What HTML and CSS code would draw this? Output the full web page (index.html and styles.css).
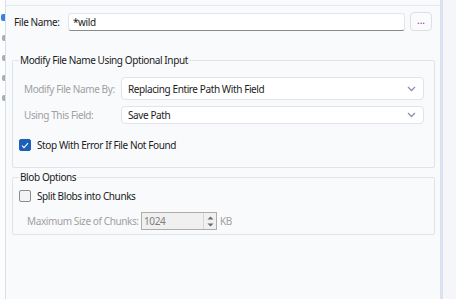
FILE: index.html
```html
<!DOCTYPE html>
<html>
  <head>
    <title>File Name</title>
    <link rel="stylesheet" href="styles.css">
  </head>
  <body>
    <div class="app">
      <div class="sidebar">
        <span class="tool tool-blue"></span>
        <span class="tool"></span>
        <span class="tool"></span>
        <span class="tool"></span>
        <span class="tool"></span>
      </div>
      <div class="panel">
        <div class="panel-head"></div>

        <div class="file-row">
          <label class="label" for="filename">File Name:</label>
          <input class="text-input" type="text" id="filename" value="*wild" />
          <button class="browse" type="button">...</button>
        </div>

        <fieldset class="group group-modify">
          <legend>Modify File Name Using Optional Input</legend>
          <div class="field-row first">
            <span class="label muted">Modify File Name By:</span>
            <div class="select tall">
              <span>Replacing Entire Path With Field</span>
              <svg class="chev" width="9" height="6" viewBox="0 0 9 6"><path d="M1 1l3.5 3.5L8 1" fill="none" stroke="#8792ad" stroke-width="1.3"/></svg>
            </div>
          </div>
          <div class="field-row">
            <span class="label muted">Using This Field:</span>
            <div class="select">
              <span>Save Path</span>
              <svg class="chev" width="9" height="6" viewBox="0 0 9 6"><path d="M1 1l3.5 3.5L8 1" fill="none" stroke="#8792ad" stroke-width="1.3"/></svg>
            </div>
          </div>
          <div class="check-row stop">
            <span class="check checked">
              <svg width="8" height="7" viewBox="0 0 8 7"><path d="M1 3.6l2 2L7 1.2" fill="none" stroke="#fff" stroke-width="1.1"/></svg>
            </span>
            <span>Stop With Error If File Not Found</span>
          </div>
        </fieldset>

        <fieldset class="group group-blob">
          <legend>Blob Options</legend>
          <div class="check-row split">
            <span class="check"></span>
            <span>Split Blobs into Chunks</span>
          </div>
          <div class="size-row">
            <span class="size-label muted">Maximum Size of Chunks:</span>
            <div class="spin">
              <span>1024</span>
              <div class="spin-btns">
                <svg width="7" height="4" viewBox="0 0 7 4"><path d="M0.5 3.5h6L3.5 0.5z" fill="#6a6a6a"/></svg>
                <svg width="7" height="4" viewBox="0 0 7 4"><path d="M0.5 0.5h6L3.5 3.5z" fill="#6a6a6a"/></svg>
              </div>
            </div>
            <span class="muted">KB</span>
          </div>
        </fieldset>
      </div>
      <div class="edge"></div>
      <div class="outside"></div>
    </div>
  </body>
</html>
```

FILE: styles.css
```css
body {
  margin: 0;
  font-family: "Noto Sans", "Open Sans", sans-serif;
  font-size: 10px;
  letter-spacing: -0.4px;
  color: #1b1b1b;
  background-color: #f4f6fa;
  white-space: nowrap;
}

.app {
  display: flex;
  height: 299px;
}

.sidebar {
  width: 6px;
  background: #fdfdfe;
  border-right: 1px solid #d8dfec;
  display: flex;
  flex-direction: column;
  align-items: flex-end;
  padding-top: 14px;
  gap: 14px;
  box-sizing: border-box;
}

.tool {
  display: block;
  width: 3px;
  height: 6px;
  background: #a7adb8;
  border-radius: 2px 0 0 2px;
}

.tool-blue {
  width: 4px;
  height: 7px;
  background: #3b7fe0;
}

.panel {
  width: 434px;
  background: #f9fafc;
}

.panel-head {
  height: 5px;
  border-bottom: 1px solid #e3e7ef;
}

.file-row {
  display: flex;
  align-items: center;
  height: 19px;
  margin-top: 6px;
  padding-left: 8px;
}

.file-row .label {
  width: 54px;
}

.text-input {
  width: 337px;
  height: 18px;
  box-sizing: border-box;
  border: 1px solid #e2e5ec;
  border-bottom: 1px solid #8a8a8a;
  border-radius: 3px;
  background: #fff;
  font: inherit;
  letter-spacing: inherit;
  color: #1b1b1b;
  padding: 0 4px;
  outline: none;
}

.browse {
  width: 22px;
  height: 19px;
  margin-left: 5px;
  box-sizing: border-box;
  border: 1px solid #dcdfe6;
  border-radius: 4px;
  background: #fbfbfd;
  font: inherit;
  line-height: 10px;
  color: #7a3a9a;
  padding: 0 0 3px;
}

.group {
  margin: 0 5px 0 6px;
  padding: 0;
  border: 1px solid #dfe3ea;
  border-radius: 2px;
}

.group legend {
  margin-left: 0;
  padding: 0 1px;
  line-height: 16px;
}

.group-modify {
  margin-top: 21px;
  padding: 9px 10px 16px 6px;
}

.group-blob {
  margin-top: 1px;
  padding: 5px 10px 4px 6px;
}

.field-row {
  display: flex;
  align-items: center;
  margin-top: 6px;
}

.field-row.first {
  margin-top: 0;
}

.field-row .label {
  width: 102px;
  padding-left: 5px;
  box-sizing: border-box;
}

.muted {
  color: #a0a0a0;
}

.select {
  flex: 1;
  display: flex;
  align-items: center;
  justify-content: space-between;
  height: 18px;
  box-sizing: border-box;
  background: #fff;
  border: 1px solid #e1e4ee;
  border-radius: 4px;
  padding: 0 7px 0 6px;
}

.select.tall {
  height: 23px;
}

.check-row {
  display: flex;
  align-items: center;
  gap: 6px;
}

.stop {
  margin-top: 15px;
  height: 12px;
}

.split {
  height: 12px;
}

.check {
  width: 12px;
  height: 12px;
  box-sizing: border-box;
  border: 1px solid #8b8b8b;
  border-radius: 2px;
  background: #f3f3f3;
  display: flex;
  align-items: center;
  justify-content: center;
}

.check.checked {
  background: #1a5fb8;
  border-color: #1a5fb8;
}

.size-row {
  display: flex;
  align-items: center;
  margin-top: 10px;
  padding-left: 8px;
  height: 18px;
}

.size-label {
  width: 114px;
}

.spin {
  display: flex;
  align-items: center;
  justify-content: space-between;
  width: 76px;
  height: 18px;
  box-sizing: border-box;
  margin-right: 3px;
  border: 1px solid #adadad;
  background: #f0f0f0;
  color: #7d7d7d;
  padding-left: 2px;
}

.spin-btns {
  display: flex;
  flex-direction: column;
  justify-content: center;
  align-items: center;
  gap: 3px;
  width: 12px;
  height: 16px;
  border-left: 1px solid #d6d6d6;
}

.edge {
  width: 3px;
  background: #dbe2ef;
}

.outside {
  flex: 1;
  background: #f4f6fa;
}
```
